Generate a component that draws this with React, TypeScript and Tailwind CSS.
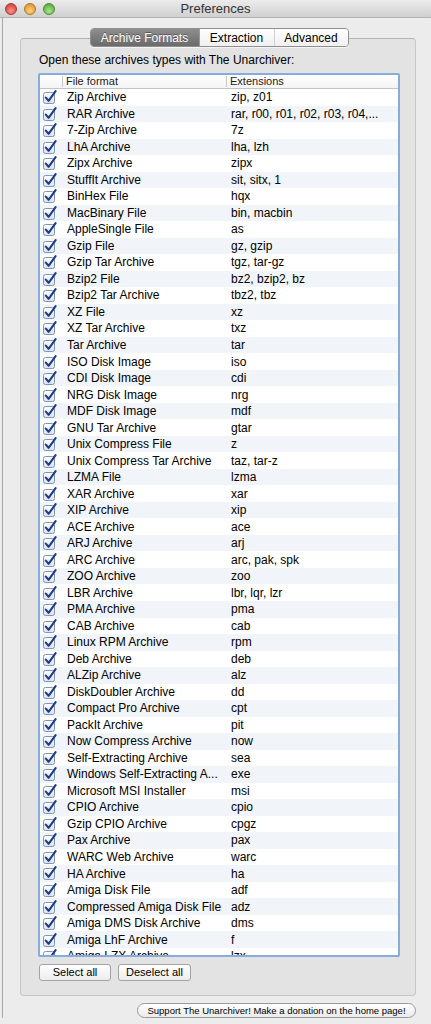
import React from 'react'

const FORMATS: [string, string][] = [
  ['Zip Archive', 'zip, z01'],
  ['RAR Archive', 'rar, r00, r01, r02, r03, r04,...'],
  ['7-Zip Archive', '7z'],
  ['LhA Archive', 'lha, lzh'],
  ['Zipx Archive', 'zipx'],
  ['StuffIt Archive', 'sit, sitx, 1'],
  ['BinHex File', 'hqx'],
  ['MacBinary File', 'bin, macbin'],
  ['AppleSingle File', 'as'],
  ['Gzip File', 'gz, gzip'],
  ['Gzip Tar Archive', 'tgz, tar-gz'],
  ['Bzip2 File', 'bz2, bzip2, bz'],
  ['Bzip2 Tar Archive', 'tbz2, tbz'],
  ['XZ File', 'xz'],
  ['XZ Tar Archive', 'txz'],
  ['Tar Archive', 'tar'],
  ['ISO Disk Image', 'iso'],
  ['CDI Disk Image', 'cdi'],
  ['NRG Disk Image', 'nrg'],
  ['MDF Disk Image', 'mdf'],
  ['GNU Tar Archive', 'gtar'],
  ['Unix Compress File', 'z'],
  ['Unix Compress Tar Archive', 'taz, tar-z'],
  ['LZMA File', 'lzma'],
  ['XAR Archive', 'xar'],
  ['XIP Archive', 'xip'],
  ['ACE Archive', 'ace'],
  ['ARJ Archive', 'arj'],
  ['ARC Archive', 'arc, pak, spk'],
  ['ZOO Archive', 'zoo'],
  ['LBR Archive', 'lbr, lqr, lzr'],
  ['PMA Archive', 'pma'],
  ['CAB Archive', 'cab'],
  ['Linux RPM Archive', 'rpm'],
  ['Deb Archive', 'deb'],
  ['ALZip Archive', 'alz'],
  ['DiskDoubler Archive', 'dd'],
  ['Compact Pro Archive', 'cpt'],
  ['PackIt Archive', 'pit'],
  ['Now Compress Archive', 'now'],
  ['Self-Extracting Archive', 'sea'],
  ['Windows Self-Extracting A...', 'exe'],
  ['Microsoft MSI Installer', 'msi'],
  ['CPIO Archive', 'cpio'],
  ['Gzip CPIO Archive', 'cpgz'],
  ['Pax Archive', 'pax'],
  ['WARC Web Archive', 'warc'],
  ['HA Archive', 'ha'],
  ['Amiga Disk File', 'adf'],
  ['Compressed Amiga Disk File', 'adz'],
  ['Amiga DMS Disk Archive', 'dms'],
  ['Amiga LhF Archive', 'f'],
  ['Amiga LZX Archive', 'lzx'],
]

function Check() {
  return (
    <svg width="14" height="14" viewBox="0 0 14 14">
      <defs>
        <linearGradient id="cb" x1="0" y1="0" x2="0" y2="1">
          <stop offset="0" stopColor="#ffffff" />
          <stop offset="1" stopColor="#d8e2ef" />
        </linearGradient>
      </defs>
      <rect x="0.5" y="2.5" width="11" height="11" rx="2" fill="url(#cb)" stroke="#7f94b4" />
      <path d="M2.8 7.6 L5.6 10.8 L12.6 1.2" fill="none" stroke="#1f3d86" strokeWidth="2.1" strokeLinecap="round" strokeLinejoin="round" />
    </svg>
  )
}

function Light({ from, to, border }: { from: string; to: string; border: string }) {
  return (
    <span
      className="w-[12px] h-[12px] rounded-full border"
      style={{ background: `radial-gradient(circle at 50% 70%, ${to}, ${from})`, borderColor: border }}
    />
  )
}

export default function App() {
  return (
    <div className="w-[431px] h-[1024px] overflow-hidden bg-[#ececec] text-black" style={{ fontFamily: '"Liberation Sans", Arial, sans-serif' }}>
      {/* Title bar */}
      <div className="relative h-[18px] flex items-center bg-gradient-to-b from-[#ececec] to-[#d0d0d0] border-b border-[#b0b0b0]">
        <div className="flex items-center gap-[7px] pl-[5px]">
          <Light from="#c9302b" to="#ff8f86" border="#a33a34" />
          <Light from="#d68a1f" to="#ffd37a" border="#ab7425" />
          <Light from="#4c9b2d" to="#a6e88c" border="#4f8a37" />
        </div>
        <div className="absolute inset-0 flex items-center justify-center text-[13px] text-[#333]">Preferences</div>
      </div>

      <div className="flex flex-col border-l border-[#a8a8a8] ml-[2px] pl-[17px] pr-[15px]">
        {/* Tabs */}
        <div className="relative z-10 flex justify-center mt-[10px] pl-[2px]">
          <div className="flex h-[19px] rounded-[4px] border border-[#8f8f8f] overflow-hidden text-[12px] shadow-[0_1px_0_rgba(255,255,255,0.6)]">
            <div className="w-[108px] flex items-center justify-center bg-gradient-to-b from-[#8e8e8e] to-[#6b6b6b] text-white [text-shadow:0_-1px_0_rgba(0,0,0,0.35)]">
              Archive Formats
            </div>
            <div className="w-[75px] flex items-center justify-center bg-gradient-to-b from-white to-[#f0f0f0] border-l border-[#9a9a9a]">
              Extraction
            </div>
            <div className="w-[74px] flex items-center justify-center bg-gradient-to-b from-white to-[#f0f0f0] border-l border-[#d0d0d0]">
              Advanced
            </div>
          </div>
        </div>

        {/* Group box */}
        <div className="-mt-[9px] h-[958px] rounded-[4px] border border-[#c6c6c6] border-t-[#b4b4b4] bg-[#e3e3e3] pl-[17px] pr-[15px] pt-[14px] flex flex-col">
          <div className="ml-[1px] text-[12px] leading-[15px]">Open these archives types with The Unarchiver:</div>

          <div className="mt-[5px] h-[884px] w-[362px] border-2 border-[#86acdd] rounded-[2px] bg-white overflow-hidden">
            <div className="flex h-[14px] items-center text-[11px] text-[#222] border-b border-[#c4c4c4] bg-gradient-to-b from-white to-[#f4f4f4]">
              <div className="w-[23px] h-[11px] border-r border-[#c8c8c8]" />
              <div className="w-[164px] pl-[3px] h-[11px] leading-[11px] border-r border-[#c8c8c8]">File format</div>
              <div className="pl-[3px] leading-[11px]">Extensions</div>
            </div>
            {FORMATS.map(([name, ext], i) => (
              <div key={name} className={`flex h-[16.53px] items-center text-[12px] ${i % 2 ? 'bg-[#f1f5fa]' : 'bg-white'}`}>
                <div className="w-[23px] pl-[3px] flex items-center">
                  <Check />
                </div>
                <div className="w-[164px] pl-[4px] whitespace-nowrap">{name}</div>
                <div className="pl-[4px] whitespace-nowrap">{ext}</div>
              </div>
            ))}
          </div>

          <div className="mt-[7px] ml-[1px] flex gap-[7px]">
            <button className="w-[72px] h-[17px] rounded-[3px] border border-[#a3a3a3] bg-gradient-to-b from-white to-[#ececec] text-[11px] leading-none">
              Select all
            </button>
            <button className="w-[73px] h-[17px] rounded-[3px] border border-[#a3a3a3] bg-gradient-to-b from-white to-[#ececec] text-[11px] leading-none">
              Deselect all
            </button>
          </div>
        </div>

        {/* Support */}
        <div className="mt-[7px] flex justify-end">
          <button className="w-[279px] h-[15px] rounded-full border border-[#9a9a9a] bg-gradient-to-b from-white to-[#ebebeb] text-[9.5px] leading-none whitespace-nowrap">
            Support The Unarchiver! Make a donation on the home page!
          </button>
        </div>
      </div>
    </div>
  )
}
